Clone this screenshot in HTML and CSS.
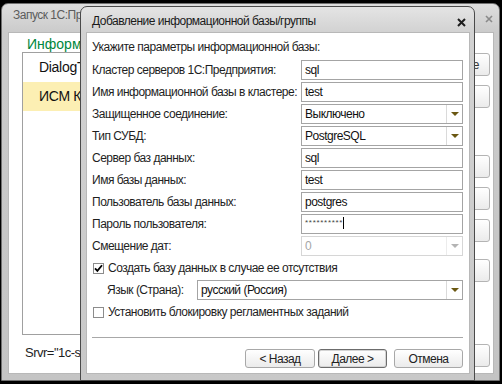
FILE: index.html
```html
<!DOCTYPE html>
<html>
<head>
  <meta charset="utf-8">
  <title>Добавление информационной базы/группы</title>
  <link rel="stylesheet" href="styles.css">
</head>
<body>

<div class="win back">
  <div class="win-title">
    <span class="title-text">Запуск 1С:Предприятия</span>
    <svg class="close" width="8" height="8" viewBox="0 0 8 8"><path d="M1 1l6 6M7 1l-6 6" stroke="#8a8a8a" stroke-width="1.6"/></svg>
  </div>
  <div class="win-body back-body">
    <div class="bases">
      <div class="caption">Информационные базы</div>
      <div class="list">
        <div class="item">DialogTest</div>
        <div class="item sel">ИСМ Корпорация</div>
      </div>
      <div class="path">Srvr="1c-server";Ref="ism";</div>
    </div>
    <div class="side">
      <button class="side-btn">1С:Предприятие</button>
      <button class="side-btn">Конфигуратор</button>
      <button class="side-btn sep-lg">Добавить...</button>
      <button class="side-btn">Изменить...</button>
      <button class="side-btn">Удалить</button>
      <button class="side-btn sep-md">Настройка...</button>
      <button class="side-btn exit">Выход</button>
    </div>
  </div>
</div>

<div class="win dlg">
  <div class="win-title">
    <span class="title-text">Добавление информационной базы/группы</span>
    <svg class="close" width="9" height="9" viewBox="0 0 9 9"><path d="M1 1l7 7M8 1l-7 7" stroke="#1e1e1e" stroke-width="2"/></svg>
  </div>
  <div class="win-body form">
    <div class="hint">Укажите параметры информационной базы:</div>

    <div class="fields">
      <label>Кластер серверов 1С:Предприятия:</label>
      <div class="input">sql</div>

      <label>Имя информационной базы в кластере:</label>
      <div class="input">test</div>

      <label>Защищенное соединение:</label>
      <div class="input combo"><span class="val">Выключено</span><span class="arrow"></span></div>

      <label>Тип СУБД:</label>
      <div class="input combo"><span class="val">PostgreSQL</span><span class="arrow"></span></div>

      <label>Сервер баз данных:</label>
      <div class="input">sql</div>

      <label>Имя базы данных:</label>
      <div class="input">test</div>

      <label>Пользователь базы данных:</label>
      <div class="input">postgres</div>

      <label>Пароль пользователя:</label>
      <div class="input pass"><span class="stars">**********</span><span class="caret"></span></div>

      <label>Смещение дат:</label>
      <div class="input combo disabled"><span class="val">0</span><span class="arrow"></span></div>

      <div class="check-row">
        <span class="box"><svg width="9" height="9" viewBox="0 0 9 9"><path d="M1 4.3l2.4 2.6L8 1.3" fill="none" stroke="#000" stroke-width="1.8"/></svg></span>
        Создать базу данных в случае ее отсутствия
      </div>

      <div class="lang-row">
        <label>Язык (Страна):</label>
        <div class="input combo"><span class="val">русский (Россия)</span><span class="arrow"></span></div>
      </div>

      <div class="check-row">
        <span class="box"></span>
        Установить блокировку регламентных заданий
      </div>
    </div>

    <div class="sep"></div>

    <div class="buttons">
      <button class="btn back-btn">&lt; Назад</button>
      <button class="btn default">Далее &gt;</button>
      <button class="btn">Отмена</button>
    </div>
  </div>
</div>

</body>
</html>
```

FILE: styles.css
```css
*,
*:before,
*:after {
  box-sizing: border-box;
}

body,
html {
  margin: 0;
  padding: 0;
  height: 100%;
}

body {
  position: relative;
  overflow: hidden;
  background: #000;
  color: #1e1e1e;
  font-family: "Liberation Sans", Arial, sans-serif;
  font-size: 12px;
  letter-spacing: -0.5px;
}

/* windows */

.win {
  position: absolute;
  display: flex;
  flex-direction: column;
  border: 1px solid #5a5a5a;
  border-radius: 7px 7px 0 0;
  background: linear-gradient(#dedede, #cbcbcb 28px, #c4c4c4);
}

.back {
  left: 1px;
  top: 3px;
  width: 499px;
  height: 378px;
  border-color: #707070;
}

.dlg {
  left: 80px;
  top: 6px;
  width: 395px;
  height: 375px;
  border-color: #4a4a4a;
  background: linear-gradient(#e4e4e4, #d2d2d2 25px, #c8c8c8);
}

.win-title {
  flex: none;
  display: flex;
  justify-content: space-between;
  align-items: flex-start;
  white-space: nowrap;
  overflow: hidden;
}

.title-text {
  line-height: 16px;
}

.back .win-title {
  height: 28px;
  padding: 3px 6px 0 11px;
  color: #5c5c5c;
}

.back .close {
  margin-top: 8px;
}

.dlg .win-title {
  height: 25px;
  padding: 6px 8px 0 11px;
  color: #1a1a1a;
}

.dlg .close {
  margin-top: 5px;
}

.win-body {
  flex: 1;
  min-height: 0;
  background: #fff;
  overflow: hidden;
  box-shadow: inset 0 0 0 1px #b8b8b8;
}

.back .win-body {
  margin: 0 5px 6px 6px;
}

.dlg .win-body {
  margin: 0 4px 6px 5px;
}

/* launcher behind */

.back-body {
  display: grid;
  grid-template-columns: 1fr 108px;
  column-gap: 12px;
  padding: 0 4px 7px 14px;
}

.caption {
  height: 20px;
  padding: 4px 0 0 5px;
  line-height: 16px;
  color: #00873c;
  font-size: 14px;
  letter-spacing: 0;
  white-space: nowrap;
}

.list {
  height: 283px;
  border: 1px solid #a0a0a0;
  overflow: hidden;
}

.item {
  height: 29px;
  line-height: 29px;
  padding-left: 16px;
  font-size: 14px;
  letter-spacing: -0.3px;
  color: #111;
  white-space: nowrap;
}

.item.sel {
  background: #fcefb3;
}

.path {
  margin-top: 10px;
  padding-left: 3px;
  line-height: 16px;
  font-size: 13px;
  white-space: nowrap;
}

.side {
  display: flex;
  flex-direction: column;
  padding-top: 21px;
}

.side-btn {
  height: 23px;
  margin-top: 9px;
  padding: 0;
  border: 1px solid #b4b4b4;
  border-radius: 3px;
  background: linear-gradient(#fff, #ebebeb);
  color: #333;
  font: inherit;
  letter-spacing: inherit;
}

.side-btn:first-child {
  margin-top: 0;
}

.side .sep-lg {
  margin-top: 47px;
}

.side .sep-md {
  margin-top: 17px;
}

.side .exit {
  margin-top: auto;
}

/* dialog form */

.form {
  padding: 7px 7px 0 6px;
}

.hint {
  line-height: 16px;
  margin-bottom: 5px;
  white-space: nowrap;
}

.fields {
  display: grid;
  grid-template-columns: 209px 1fr;
  grid-auto-rows: 20px;
  row-gap: 2px;
}

label {
  line-height: 20px;
  white-space: nowrap;
}

.input {
  display: flex;
  height: 20px;
  padding-left: 3px;
  border: 1px solid #a4a4a4;
  background: #fff;
  line-height: 18px;
  color: #111;
  white-space: nowrap;
}

.combo .val {
  flex: 1;
}

.combo .arrow {
  flex: none;
  display: flex;
  align-items: center;
  justify-content: center;
  width: 16px;
  border-left: 1px solid #dadada;
}

.combo .arrow:after {
  content: "";
  border-top: 4px solid #6b5812;
  border-left: 4px solid transparent;
  border-right: 4px solid transparent;
}

.combo.disabled {
  border-color: #d6d6d6;
  color: #a6a6a6;
}

.combo.disabled .arrow {
  border-left-color: #ececec;
}

.combo.disabled .arrow:after {
  border-top-color: #b4b4b4;
}

.pass {
  align-items: flex-start;
}

.stars {
  margin-top: 3px;
  font-size: 8px;
  line-height: 9px;
  letter-spacing: 0.7px;
  color: #444;
}

.caret {
  width: 1px;
  height: 12px;
  margin: 2px 0 0 0;
  background: #000;
}

.check-row {
  grid-column: 1 / -1;
  display: flex;
  align-items: center;
  padding-left: 1px;
  white-space: nowrap;
}

.box {
  display: flex;
  align-items: center;
  justify-content: center;
  width: 11px;
  height: 11px;
  margin-right: 4px;
  border: 1px solid #8c8c8c;
  background: #fff;
}

.lang-row {
  grid-column: 1 / -1;
  display: grid;
  grid-template-columns: 105px 1fr;
}

.lang-row label {
  padding-left: 15px;
}

.sep {
  height: 1px;
  margin-top: 15px;
  background: #a8a8a8;
}

.buttons {
  display: flex;
  justify-content: flex-end;
  margin-top: 11px;
}

.btn {
  width: 69px;
  height: 19px;
  padding: 0;
  border: 1px solid #a8a8a8;
  border-radius: 3px;
  background: linear-gradient(#fff, #ebebeb);
  color: #222;
  font: inherit;
  letter-spacing: inherit;
}

.btn.back-btn {
  width: 70px;
  margin-right: 3px;
}

.btn.default {
  margin-right: 7px;
  border-color: #6c6c6c;
  box-shadow: inset 0 0 0 1px #d4d4d4;
}
```
